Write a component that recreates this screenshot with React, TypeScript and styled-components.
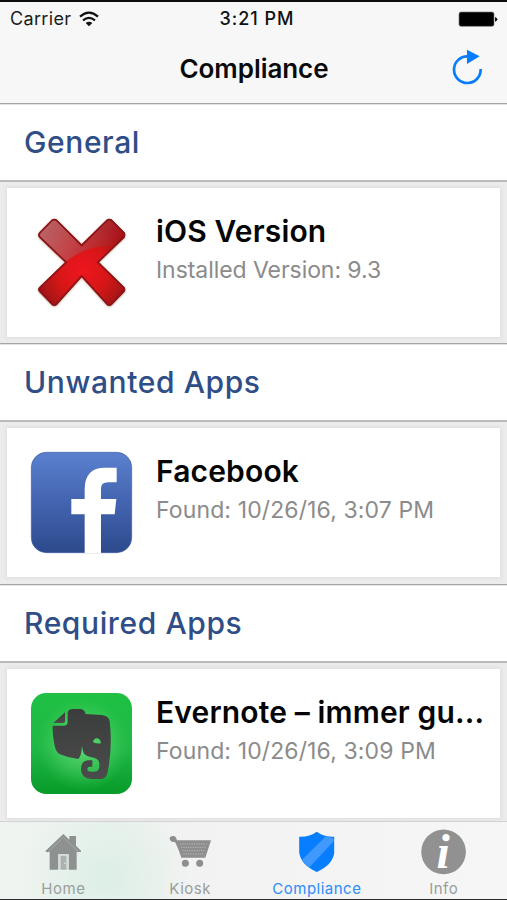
import React from 'react';
import styled, { createGlobalStyle } from 'styled-components';

const GlobalStyle = createGlobalStyle`
  * { box-sizing: border-box; }
  body { margin: 0; background: #ececec; font-family: Inter, "Liberation Sans", sans-serif; }
  svg { display: block; flex: none; overflow: visible; }
`;

const Screen = styled.div`
  display: flex;
  flex-direction: column;
  width: 507px;
  height: 900px;
  overflow: hidden;
  border-top: 2px solid #0c0c0c;
  border-bottom: 1px solid #2c2c2c;
  background: #ececec;
`;

const TopBar = styled.header`
  flex: none;
  height: 101px;
  background: #f7f7f7;
`;

const StatusBar = styled.div`
  display: grid;
  grid-template-columns: 1fr auto 1fr;
  align-items: center;
  height: 33px;
  padding: 0 9px 0 10px;
  font-size: 18px;
  line-height: 33px;
  color: #1c1c1c;
`;

const Carrier = styled.div`
  display: flex;
  align-items: center;
  gap: 8px;
  letter-spacing: 0.35px;
`;

const Clock = styled.div`
  padding-left: 6px;
  font-size: 18px;
  font-weight: 500;
  letter-spacing: 1px;
  color: #111;
`;

const Battery = styled.div`
  display: flex;
  justify-content: flex-end;
`;

const NavBar = styled.div`
  display: grid;
  grid-template-columns: 1fr auto 1fr;
  align-items: center;
  height: 67px;
`;

const NavTitle = styled.h1`
  grid-column: 2;
  margin: 0;
  padding-left: 1px;
  font-size: 26px;
  font-weight: 600;
  line-height: 32px;
  letter-spacing: -0.05px;
  color: #0a0a0a;
`;

const RefreshButton = styled.button`
  justify-self: end;
  margin: 0 23px 4px 0;
  padding: 0;
  border: 0;
  background: none;
`;

const List = styled.main`
  flex: 1;
  min-height: 0;
  overflow: hidden;
`;

const Section = styled.section`
  height: 240.3px;
  border-top: 1px solid #a6a6a6;
`;

const SectionTitle = styled.h2`
  height: 78px;
  margin: 0;
  padding-left: 24px;
  border-bottom: 2px solid #bababa;
  background: #fff;
  box-shadow: inset 0 1px #e4e4e4;
  font-size: 30px;
  font-weight: 550;
  line-height: 77px;
  letter-spacing: 0.6px;
  color: #2f4d86;
`;

const Card = styled.article`
  display: flex;
  height: 149px;
  margin: 6px 7px 0;
  padding: 24px 11px 0 24px;
  gap: 24px;
  background: #fff;
  box-shadow: 0 0 4px 1px #dcdcdc;
`;

const CardText = styled.div`
  flex: 1;
  min-width: 0;
`;

const CardTitle = styled.h3`
  margin: 0;
  font-size: 30px;
  font-weight: 600;
  line-height: 38px;
  letter-spacing: 0.15px;
  white-space: nowrap;
  color: #050505;
`;

const CardDetail = styled.p<{ $spacing: number }>`
  margin: 5px 0 0;
  font-size: 23px;
  line-height: 30px;
  letter-spacing: ${(p) => p.$spacing}px;
  white-space: nowrap;
  color: #8b8b8b;
`;

const TabBar = styled.nav`
  display: grid;
  grid-template-columns: repeat(4, 1fr);
  flex: none;
  height: 78px;
  border-top: 1px solid #d2d2d2;
  background:
    radial-gradient(ellipse 85px 75px at 105px 55px, rgba(213, 237, 225, 0.65), rgba(213, 237, 225, 0)),
    linear-gradient(90deg, #eff4f1 0, #ebf2ee 120px, #f1f2f1 175px, #f6f6f6 100%);
`;

const Tab = styled.a<{ $active?: boolean }>`
  display: flex;
  flex-direction: column;
  align-items: center;
  padding-top: 4px;
  font-size: 15px;
  line-height: 25px;
  letter-spacing: 0.5px;
  color: ${(p) => (p.$active ? '#2b8cf8' : '#9a9e9c')};
`;

const WifiIcon = () => (
  <svg width="20" height="16" viewBox="240 28 60 48" fill="none" stroke="#111" strokeWidth="6.5">
    <path d="M243 45Q270 21 297 45" />
    <path d="M252 56Q270 41 288 56" />
    <path d="M260 64Q270 57 280 64L270 74Z" fill="#111" stroke="none" />
  </svg>
);

const BatteryIcon = () => (
  <svg width="40" height="16" viewBox="606 29 120 48">
    <rect x="609" y="32" width="105" height="43" rx="6" fill="#000" stroke="#777" strokeWidth="2" />
    <path d="M717 47Q724 49 724 54T717 61Z" fill="#111" />
  </svg>
);

const RefreshIcon = () => (
  <svg width="32" height="36" viewBox="585 147 96 108">
    <path d="M671 207A40 40 0 1 1 632 169" fill="none" stroke="#087cff" strokeWidth="8" />
    <path d="M630 149L668 169L630 192Z" fill="#087cff" />
  </svg>
);

const CROSS =
  'M80 44Q88 38 96 44L170 118L245 44Q253 38 261 44L298 82Q304 90 298 98L222 172L298 246Q304 253 298 261L261 299Q253 306 245 299L170 217L96 299Q88 306 80 299L43 261Q36 253 43 246L120 172L43 98Q36 90 43 82Z';

const CrossIcon = () => (
  <svg width="101" height="101" viewBox="18 21 303 303">
    <defs>
      <radialGradient id="crossBody" gradientUnits="userSpaceOnUse" cx="172" cy="195" r="155">
        <stop offset="0" stopColor="#ee161b" />
        <stop offset="0.5" stopColor="#d61519" />
        <stop offset="1" stopColor="#941013" />
      </radialGradient>
      <linearGradient id="crossGloss" x1="0" y1="0" x2="1" y2="0.25">
        <stop offset="0" stopColor="#cf9090" stopOpacity="0.75" />
        <stop offset="0.55" stopColor="#b94b50" stopOpacity="0.75" />
        <stop offset="1" stopColor="#ac1014" stopOpacity="0.8" />
      </linearGradient>
      <clipPath id="crossClip">
        <path d={CROSS} />
      </clipPath>
      <filter id="crossShadow" x="-10%" y="-10%" width="120%" height="120%">
        <feDropShadow dx="0" dy="2" stdDeviation="3" floodColor="#6b5a38" floodOpacity="0.55" />
      </filter>
    </defs>
    <path d={CROSS} fill="url(#crossBody)" filter="url(#crossShadow)" />
    <g clipPath="url(#crossClip)">
      <path d="M30 30H310V122Q255 118 215 126Q160 138 112 178L100 186L30 120Z" fill="url(#crossGloss)" />
      <path d={CROSS} fill="none" stroke="#8b1518" strokeWidth="10" />
    </g>
  </svg>
);

const FacebookIcon = () => (
  <svg width="101" height="101" viewBox="33 36 303 303">
    <defs>
      <linearGradient id="fbBody" x1="0" y1="0" x2="0" y2="1">
        <stop offset="0" stopColor="#5a80ce" />
        <stop offset="0.5" stopColor="#4364b0" />
        <stop offset="1" stopColor="#2c4a8c" />
      </linearGradient>
    </defs>
    <rect x="34" y="37" width="301" height="301" rx="45" fill="url(#fbBody)" stroke="#3b5ba5" strokeWidth="2" />
    <path d="M194 339V223H154V177H194V148Q194 83 255 83H290V127H264Q243 127 243 145V177H289L284 223H243V339Z" fill="#fff" />
  </svg>
);

const EvernoteIcon = () => (
  <svg width="101" height="101" viewBox="33 36 303 303">
    <defs>
      <linearGradient id="enBody" x1="0" y1="0" x2="0" y2="1">
        <stop offset="0" stopColor="#1fc044" />
        <stop offset="0.55" stopColor="#20b845" />
        <stop offset="1" stopColor="#079b28" />
      </linearGradient>
      <radialGradient id="enGlow">
        <stop offset="0" stopColor="#6ee381" stopOpacity="0.85" />
        <stop offset="0.6" stopColor="#58d66e" stopOpacity="0.45" />
        <stop offset="1" stopColor="#40cc5c" stopOpacity="0" />
      </radialGradient>
      <linearGradient id="enHead" x1="0" y1="0" x2="0" y2="1">
        <stop offset="0" stopColor="#3b3d3c" />
        <stop offset="1" stopColor="#4b4b4b" />
      </linearGradient>
    </defs>
    <rect x="33" y="36" width="303" height="303" rx="46" fill="url(#enBody)" />
    <circle cx="190" cy="190" r="140" fill="url(#enGlow)" />
    <g fill="url(#enHead)">
      <path d="M135 94V120Q135 126 129 126H100Z" />
      <path
        fillRule="evenodd"
        d="M98 134H131Q143 134 143 122V95Q145 84 158 84H180Q193 84 197 99L245 102Q266 104 269 121Q278 198 263 272Q259 294 241 294H214Q183 293 183 265Q183 238 207 238H217V257H209Q202 257 202 264Q202 272 213 272H224Q238 272 238 255V248Q238 234 222 230Q198 227 191 216Q188 210 186 195Q184 226 175 234Q145 231 120 220Q107 214 103 190Q97 160 98 134ZM219 184Q231 189 243 187Q241 172 230 172Q221 173 219 184Z"
      />
    </g>
  </svg>
);

const HomeIcon = () => (
  <svg width="60" height="50" viewBox="100 78 180 150" fill="#8d918f">
    <path d="M191 102L209 119V108H229V137L244 152V156H231V209H207V162H176V209H150V156H138V152Z" />
    <path d="M144 157L191 112L238 157" fill="none" stroke="#a8aeab" strokeWidth="2.5" />
    <path d="M176 162H207V209H176Z" fill="#d5dcd8" />
    <path d="M183 168H200V209H183Z" fill="#abb1ae" />
    <circle cx="196" cy="190" r="2.5" fill="#e2e6e4" />
  </svg>
);

const CartIcon = () => (
  <svg width="60" height="50" viewBox="480 78 180 150" fill="#8d8e8d">
    <path d="M520 108Q528 108 531 121H633L616 173H544Q534 143 525 126Q510 126 509 116Q509 109 520 108Z" />
    <g fill="none" stroke="#bcbdbc" strokeWidth="2.5" strokeDasharray="4 3">
      <path d="M540 132H620M543 142H617M547 152H614M550 162H610" />
    </g>
    <circle cx="556" cy="190" r="10.5" />
    <circle cx="599" cy="190" r="10.5" />
  </svg>
);

const ShieldIcon = () => (
  <svg width="60" height="50" viewBox="101.7 78 180 150">
    <defs>
      <clipPath id="shieldClip">
        <path d="M191 95Q212 111 244 110V157Q239 195 191 216Q143 195 138 157V110Q170 111 191 95Z" />
      </clipPath>
    </defs>
    <g clipPath="url(#shieldClip)">
      <path d="M130 90H250V220H130Z" fill="#077dff" />
      <path d="M222 105L246 119L168 203L144 182Z" fill="#3f99ff" />
    </g>
  </svg>
);

const InfoIcon = () => (
  <svg width="60" height="50" viewBox="481.8 78 180 150">
    <circle cx="570.5" cy="155.5" r="67" fill="#919191" />
    <text
      x="569"
      y="203"
      textAnchor="middle"
      fontFamily="Liberation Serif, serif"
      fontSize="143"
      fontStyle="italic"
      fontWeight="700"
      letterSpacing="0"
      fill="#fff"
    >
      i
    </text>
  </svg>
);

const sections = [
  { heading: 'General', title: 'iOS Version', detail: 'Installed Version: 9.3', spacing: -0.06, Icon: CrossIcon },
  { heading: 'Unwanted Apps', title: 'Facebook', detail: 'Found: 10/26/16, 3:07 PM', spacing: 0.12, Icon: FacebookIcon },
  { heading: 'Required Apps', title: 'Evernote – immer gu...', detail: 'Found: 10/26/16, 3:09 PM', spacing: 0.12, Icon: EvernoteIcon },
];

const tabs = [
  { label: 'Home', Icon: HomeIcon },
  { label: 'Kiosk', Icon: CartIcon },
  { label: 'Compliance', Icon: ShieldIcon, active: true },
  { label: 'Info', Icon: InfoIcon },
];

export default function App() {
  return (
    <Screen>
      <GlobalStyle />
      <TopBar>
        <StatusBar>
          <Carrier>
            Carrier
            <WifiIcon />
          </Carrier>
          <Clock>3:21 PM</Clock>
          <Battery>
            <BatteryIcon />
          </Battery>
        </StatusBar>
        <NavBar>
          <NavTitle>Compliance</NavTitle>
          <RefreshButton aria-label="Refresh">
            <RefreshIcon />
          </RefreshButton>
        </NavBar>
      </TopBar>
      <List>
        {sections.map(({ heading, title, detail, spacing, Icon }) => (
          <Section key={heading}>
            <SectionTitle>{heading}</SectionTitle>
            <Card>
              <Icon />
              <CardText>
                <CardTitle>{title}</CardTitle>
                <CardDetail $spacing={spacing}>{detail}</CardDetail>
              </CardText>
            </Card>
          </Section>
        ))}
      </List>
      <TabBar>
        {tabs.map(({ label, Icon, active }) => (
          <Tab key={label} $active={active}>
            <Icon />
            {label}
          </Tab>
        ))}
      </TabBar>
    </Screen>
  );
}
